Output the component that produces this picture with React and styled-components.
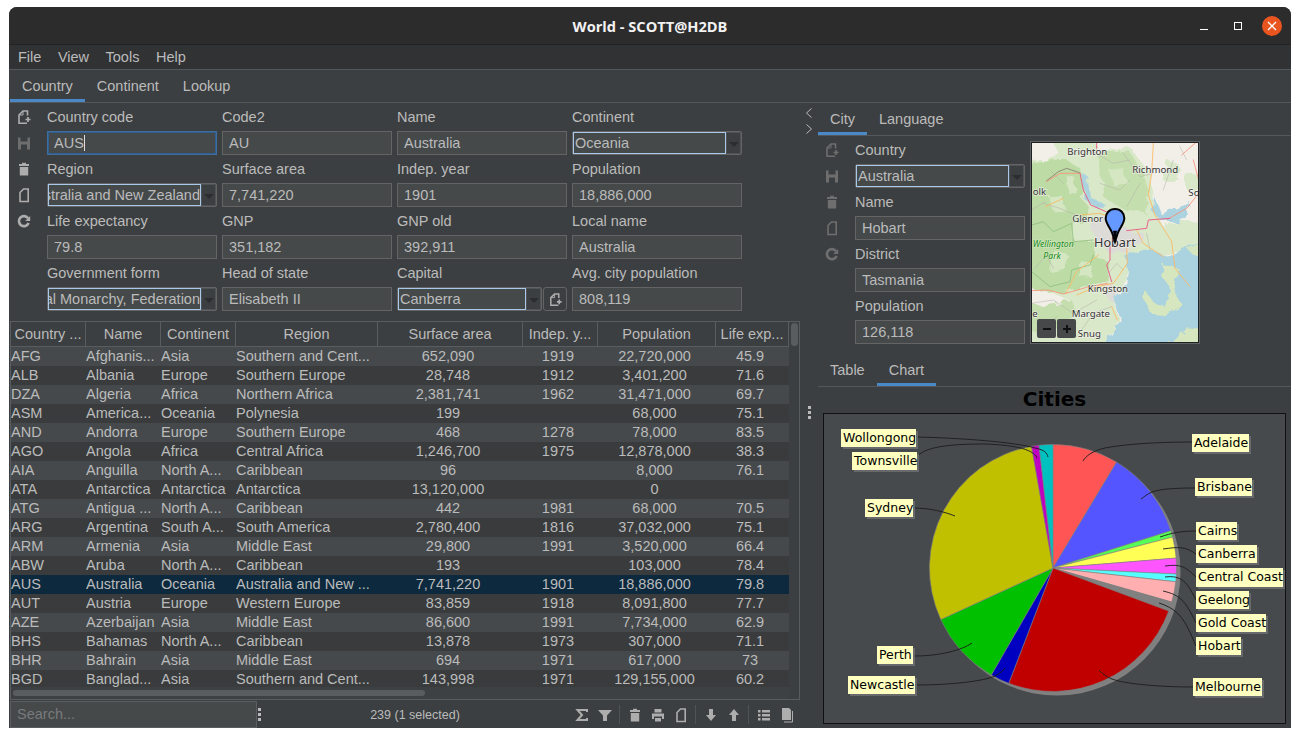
import React from 'react';
import styled, { createGlobalStyle } from 'styled-components';

const GlobalStyle = createGlobalStyle`
  html, body { margin: 0; padding: 0; background: #fff; }
  body { font-family: "Liberation Sans", Arial, sans-serif; font-size: 14.5px; color: #bbb; }
`;

const Window = styled.div`
  width: 1282px;
  height: 721px;
  margin: 7px 0 0 9px;
  background: #3c3f41;
  border-radius: 8px 8px 0 0;
  display: flex;
  flex-direction: column;
  overflow: hidden;
`;

const TitleBar = styled.div`
  height: 36px;
  padding-top: 1px;
  flex: none;
  background: #2c2c2c;
  border-bottom: 1px solid #232323;
  position: relative;
  display: flex;
  align-items: center;
  justify-content: center;
  color: #f2f2f2;
  font-family: "Open Sans", sans-serif;
  font-weight: 700;
  font-size: 14.6px;
`;

const WindowButtons = styled.div`
  position: absolute;
  right: 9px;
  top: 9px;
  display: flex;
  align-items: center;
  gap: 14px;
`;

const WinButton = styled.div`
  width: 20px;
  height: 20px;
  display: flex;
  align-items: center;
  justify-content: center;
  border-radius: 50%;
  background: ${p => (p.$close ? '#e9541f' : 'transparent')};
`;

const MenuBar = styled.div`
  height: 24px;
  flex: none;
  background: #303234;
  border-bottom: 1px solid #55585a;
  display: flex;
  align-items: center;
  padding-left: 9px;
  gap: 16.5px;
`;

const TabBar = styled.div`
  height: 32px;
  flex: none;
  display: flex;
  border-bottom: 1px solid #55585a;
  padding-left: ${p => (p.$inset ? '1px' : '0')};
`;

const Tab = styled.div`
  padding: 0 12px;
  line-height: 32px;
  height: 32px;
  box-sizing: border-box;
  margin-bottom: -1px;
  border-bottom: ${p => (p.$active ? '3px solid #4a88c7' : 'none')};
`;

const Main = styled.div`
  flex: 1;
  display: flex;
  min-height: 0;
`;

const LeftPane = styled.div`
  width: 790px;
  padding-left: 1px;
  display: flex;
  flex-direction: column;
`;

const Splitter = styled.div`
  width: 18px;
  flex: none;
  position: relative;
  display: flex;
  flex-direction: column;
  align-items: center;
`;

const Chevrons = styled.div`
  display: flex;
  flex-direction: column;
  gap: 4px;
  margin: 4px 1px 0 0;
`;

const SplitDots = styled.div`
  margin-top: 271px;
  display: flex;
  flex-direction: column;
  gap: 2px;
  & > i {
    width: 3px;
    height: 3px;
    background: #bbb;
    display: block;
  }
`;

const RightPane = styled.div`
  width: 473px;
  flex: none;
  display: flex;
  flex-direction: column;
`;

const FormRow = styled.div`
  display: flex;
  flex: none;
`;

const SideTools = styled.div`
  width: 37px;
  flex: none;
  display: flex;
  flex-direction: column;
  padding-top: 1px;
`;

const SideTool = styled.div`
  height: 26px;
  width: 26px;
  margin-left: 1px;
  display: flex;
  align-items: center;
  justify-content: center;
`;

const FormGrid = styled.div`
  display: grid;
  grid-template-columns: repeat(${p => p.$cols || 4}, 170px);
  column-gap: 5px;
`;

const FieldBox = styled.div`
  display: flex;
  flex-direction: column;
  min-width: 0;
`;

const Label = styled.div`
  height: 28px;
  line-height: 28px;
`;

const Input = styled.div`
  height: 24px;
  box-sizing: border-box;
  background: #45494a;
  border: 1px solid ${p => (p.$focus ? '#3f6e9e' : '#646464')};
  box-shadow: ${p => (p.$focus ? 'inset 0 0 0 1px #2f5f90' : 'none')};
  line-height: 22px;
  padding-left: 6px;
  white-space: nowrap;
  overflow: hidden;
`;

const Caret = styled.span`
  display: inline-block;
  width: 1px;
  height: 16px;
  background: #ddd;
  vertical-align: -3px;
`;

const ComboRow = styled.div`
  display: flex;
  gap: 1px;
`;

const Combo = styled.div`
  flex: 1;
  min-width: 0;
  height: 24px;
  box-sizing: border-box;
  display: flex;
  background: #45494a;
  border: 1px solid #646464;
  border-radius: 2px;
`;

const ComboText = styled.div`
  flex: 1;
  min-width: 0;
  border: 1px solid #a9c9ea;
  line-height: 20px;
  padding-left: 1px;
  overflow: hidden;
  white-space: nowrap;
  display: flex;
  justify-content: ${p => (p.$clip ? 'flex-end' : 'flex-start')};
`;

const ComboArrow = styled.div`
  width: 15px;
  flex: none;
  display: flex;
  align-items: center;
  justify-content: center;
  background: #3c3f41;
  box-shadow: inset 0 0 0 1px #505355;
  &::after {
    content: '';
    margin-top: 2px;
    border-left: 5px solid transparent;
    border-right: 5px solid transparent;
    border-top: 5px solid #2b2d2f;
  }
`;

const SmallButton = styled.div`
  width: 24px;
  height: 24px;
  box-sizing: border-box;
  flex: none;
  border: 1px solid #646464;
  border-radius: 3px;
  display: flex;
  align-items: center;
  justify-content: center;
`;

const TableWrap = styled.div`
  margin-top: 10px;
  width: 790px;
  height: 379px;
  box-sizing: border-box;
  border: 1px solid #5a5d5f;
  position: relative;
  overflow: hidden;
`;

const COLUMNS = '75px 75px 75px 142px 145px 75px 118px 73px';

const HeaderRow = styled.div`
  display: grid;
  grid-template-columns: ${COLUMNS};
  height: 24px;
  border-bottom: 1px solid #5a5d5f;
  margin-right: 10px;
`;

const HeaderCell = styled.div`
  text-align: center;
  line-height: 24px;
  border-right: 1px solid #5a5d5f;
  white-space: nowrap;
  overflow: hidden;
`;

const Row = styled.div`
  display: grid;
  grid-template-columns: ${COLUMNS};
  height: 19px;
  line-height: 19px;
  margin-right: 10px;
  background: ${p => (p.$selected ? '#0d293e' : p.$odd ? '#393b3d' : '#45494b')};
`;

const Cell = styled.div`
  white-space: nowrap;
  overflow: hidden;
  text-align: ${p => (p.$center ? 'center' : 'left')};
  padding-right: ${p => (p.$center ? '5px' : '0')};
`;

const VThumb = styled.div`
  position: absolute;
  top: 1px;
  right: 1px;
  width: 7px;
  height: 23px;
  border-radius: 4px;
  background: #5a5d5f;
`;

const HTrack = styled.div`
  position: absolute;
  left: 0;
  right: 9px;
  bottom: 0;
  height: 12px;
  background: #3e4143;
`;

const HThumb = styled.div`
  position: absolute;
  left: 2px;
  top: 3px;
  width: 412px;
  height: 6px;
  border-radius: 3px;
  background: #5a5d5f;
`;

const StatusBar = styled.div`
  flex: 1;
  display: flex;
  align-items: center;
  margin-top: 1px;
`;

const Search = styled.div`
  width: 247px;
  height: 27px;
  box-sizing: border-box;
  background: #45494a;
  border: 1px solid #5a5d5f;
  color: #787a7c;
  line-height: 25px;
  padding-left: 6px;
`;

const MenuDots = styled.div`
  width: 5px;
  display: flex;
  flex-direction: column;
  align-items: center;
  gap: 2px;
  & > i {
    width: 3px;
    height: 3px;
    background: #bbb;
    display: block;
  }
`;

const Count = styled.div`
  flex: 1;
  text-align: center;
  font-size: 12.5px;
  padding-right: 2px;
`;

const ToolBar = styled.div`
  display: flex;
  align-items: center;
  padding-right: 2px;
`;

const ToolButton = styled.div`
  width: 23px;
  height: 23px;
  display: flex;
  align-items: center;
  justify-content: center;
`;

const ToolSep = styled.div`
  width: 1px;
  height: 19px;
  background: #505355;
  margin: 0 3px;
`;

const DetailRow = styled.div`
  display: flex;
  flex: none;
`;

const MapFrame = styled.div`
  width: 170px;
  height: 203px;
  margin: 5px 0 0 5px;
  box-sizing: border-box;
  border: 1px solid #606365;
  padding: 1px;
  background: #1f2021;
  position: relative;
  overflow: hidden;
`;

const MapZoom = styled.div`
  position: absolute;
  left: 6px;
  bottom: 5px;
  display: flex;
  gap: 1px;
`;

const MapZoomButton = styled.div`
  width: 19px;
  height: 19px;
  border-radius: 2px;
  background: #46484a;
  display: flex;
  align-items: center;
  justify-content: center;
`;

const LowerTabs = styled(TabBar)`
  margin-top: 10px;
`;

const ChartPane = styled.div`
  flex: 1;
  display: flex;
  flex-direction: column;
  padding: 0 5px 4px;
  min-height: 0;
`;

const ChartTitle = styled.div`
  height: 26px;
  line-height: 25px;
  text-align: center;
  font-family: "DejaVu Sans", sans-serif;
  font-weight: 700;
  font-size: 20px;
  color: #000;
  flex: none;
`;

const Plot = styled.div`
  flex: 1;
  box-sizing: border-box;
  border: 1px solid #111;
  background: #474a4d;
  overflow: hidden;
`;

// simple 16px glyphs matching the application's toolbar set
const ICONS = {
  add: (
    <g fill="none" stroke="currentColor" strokeWidth="1.6">
      <path d="M11.5 6.5V2H7L3 6v8.2h8" />
      <path d="M7 2v4H3" strokeWidth="1" />
      <path d="M9.5 10.5h5M12 8v5" strokeWidth="1.7" />
    </g>
  ),
  save: (
    <path fill="currentColor" fillRule="evenodd" d="M2 2.5h2.5v4h7v-4H14v12H2zM5 9.5v5h6v-5z" />
  ),
  trash: (
    <g fill="currentColor">
      <rect x="3" y="3" width="10" height="2" />
      <rect x="6" y="1.8" width="4" height="1.4" />
      <rect x="3.8" y="6" width="8.4" height="8.5" />
    </g>
  ),
  doc: (
    <path fill="none" stroke="currentColor" strokeWidth="1.6" d="M12.2 2H7.5L4 5.5v9h8.2z" />
  ),
  refresh: (
    <g>
      <path fill="none" stroke="currentColor" strokeWidth="2.6" d="M12 5.2A5 5 0 1 0 12.6 10" />
      <path fill="currentColor" d="M14.2 3v5H9.2z" />
    </g>
  ),
  sigma: (
    <path fill="none" stroke="currentColor" strokeWidth="2" d="M13 5V3H3.5l4.5 5-4.5 5H13v-2" />
  ),
  filter: <path fill="currentColor" d="M1 3h14L10 8.5V14H6V8.5z" />,
  print: (
    <g fill="currentColor">
      <path d="M4.5 2h7v3.5h-7z" />
      <path fillRule="evenodd" d="M2 6.5h12V12h-2V9.5H4V12H2z" />
      <path d="M5 11h6v3.5H5z" />
    </g>
  ),
  down: <path fill="currentColor" d="M6 2h4v6h3l-5 6-5-6h3z" />,
  up: <path fill="currentColor" d="M6 14h4V8h3L8 2 3 8h3z" />,
  list: (
    <g fill="currentColor">
      <path d="M2 3h2.5v2.5H2zM6 3h8v2.5H6zM2 7h2.5v2.5H2zM6 7h8v2.5H6zM2 11h2.5v2.5H2zM6 11h8v2.5H6z" />
    </g>
  ),
  copy: (
    <g>
      <path fill="none" stroke="currentColor" strokeWidth="1" d="M13.5 4v11H5" />
      <path fill="currentColor" d="M3 1h7l2 2v10H3z" />
    </g>
  ),
};

const Icon = ({ name, color = '#adadad', size = 16 }) => (
  <svg width={size} height={size} viewBox="0 0 16 16" style={{ color }}>
    {ICONS[name]}
  </svg>
);

const Chevron = ({ left }) => (
  <svg width="8" height="12" viewBox="0 0 8 12">
    <path d={left ? 'M6.5 1.5L1.5 6l5 4.5' : 'M1.5 1.5L6.5 6l-5 4.5'} fill="none" stroke="#bbb" strokeWidth="1" />
  </svg>
);

const Field = ({ label, value, focus, caret }) => (
  <FieldBox>
    <Label>{label}</Label>
    <Input $focus={focus}>
      {value}
      {caret && <Caret />}
    </Input>
  </FieldBox>
);

const ComboField = ({ label, value, clip, extra }) => (
  <FieldBox>
    <Label>{label}</Label>
    <ComboRow>
      <Combo>
        <ComboText $clip={clip}>
          <span>{value}</span>
        </ComboText>
        <ComboArrow />
      </Combo>
      {extra}
    </ComboRow>
  </FieldBox>
);

const HEADERS = ['Country ...', 'Name', 'Continent', 'Region', 'Surface area', 'Indep. y...', 'Population', 'Life exp...'];

const ROWS = [
  ['AFG', 'Afghanis...', 'Asia', 'Southern and Cent...', '652,090', '1919', '22,720,000', '45.9'],
  ['ALB', 'Albania', 'Europe', 'Southern Europe', '28,748', '1912', '3,401,200', '71.6'],
  ['DZA', 'Algeria', 'Africa', 'Northern Africa', '2,381,741', '1962', '31,471,000', '69.7'],
  ['ASM', 'America...', 'Oceania', 'Polynesia', '199', '', '68,000', '75.1'],
  ['AND', 'Andorra', 'Europe', 'Southern Europe', '468', '1278', '78,000', '83.5'],
  ['AGO', 'Angola', 'Africa', 'Central Africa', '1,246,700', '1975', '12,878,000', '38.3'],
  ['AIA', 'Anguilla', 'North A...', 'Caribbean', '96', '', '8,000', '76.1'],
  ['ATA', 'Antarctica', 'Antarctica', 'Antarctica', '13,120,000', '', '0', ''],
  ['ATG', 'Antigua ...', 'North A...', 'Caribbean', '442', '1981', '68,000', '70.5'],
  ['ARG', 'Argentina', 'South A...', 'South America', '2,780,400', '1816', '37,032,000', '75.1'],
  ['ARM', 'Armenia', 'Asia', 'Middle East', '29,800', '1991', '3,520,000', '66.4'],
  ['ABW', 'Aruba', 'North A...', 'Caribbean', '193', '', '103,000', '78.4'],
  ['AUS', 'Australia', 'Oceania', 'Australia and New ...', '7,741,220', '1901', '18,886,000', '79.8'],
  ['AUT', 'Austria', 'Europe', 'Western Europe', '83,859', '1918', '8,091,800', '77.7'],
  ['AZE', 'Azerbaijan', 'Asia', 'Middle East', '86,600', '1991', '7,734,000', '62.9'],
  ['BHS', 'Bahamas', 'North A...', 'Caribbean', '13,878', '1973', '307,000', '71.1'],
  ['BHR', 'Bahrain', 'Asia', 'Middle East', '694', '1971', '617,000', '73'],
  ['BGD', 'Banglad...', 'Asia', 'Southern and Cent...', '143,998', '1971', '129,155,000', '60.2'],
];

// drawn in the 510x615 space of a 3x crop, scaled down by the viewBox
const MapDrawing = () => (
  <svg width="166" height="199" viewBox="6 9 498 597" style={{ display: 'block' }}>
    <defs>
      <filter id="rough" x="-5%" y="-5%" width="110%" height="110%">
        <feTurbulence type="fractalNoise" baseFrequency="0.035" numOctaves="4" seed="7" />
        <feDisplacementMap in="SourceGraphic" scale="26" />
      </filter>
    </defs>
    <rect x="0" y="0" width="510" height="615" fill="#f2efe9" />
    <g filter="url(#rough)">
      {/* forest and scrub */}
      <path fill="#d9e8c8" d="M-20 -20H190L205 40L300 20L360 90L370 190L400 260L470 240L530 250V330L440 340L390 350L300 340L290 420L250 480L270 545L205 635H-20Z" />
      <path fill="#bcdba5" d="M-20 75L70 60L110 60L150 85L165 135L150 170L180 205L170 240L128 250L128 300L195 300L195 350L235 365L232 420L170 440L90 460L-20 450Z" />
      <path fill="#c4dfad" d="M205 45L295 30L335 90L355 150L345 220L275 205L225 175Z" />
      <path fill="#c4dfad" d="M-20 480L60 470L125 480L140 520L95 560L40 590L-20 560Z" />
      <path fill="#d4e6c2" d="M110 110L135 115L140 150L115 160ZM55 165L100 170L105 210L70 215ZM70 330L115 345L105 390L60 395ZM150 360L185 370L185 410L150 415ZM240 90L280 85L290 130L250 140Z" />
      <path fill="#f2efe9" d="M-20 -20H60L85 40L50 60L-20 60ZM305 30L370 -10L530 -10V170L455 200L405 150L360 100ZM-10 440L90 470L120 480L40 500L-20 480Z" />
      <path fill="#d9e8c8" d="M410 60L450 75L440 130L398 120ZM465 100L530 95V150L470 150ZM385 270L430 300L400 340L360 320Z" />
      {/* built up around the city */}
      <path fill="#dddbd7" d="M180 240L235 225L300 270L295 335L240 340L195 295ZM220 430L265 440L260 490L235 480ZM280 275L340 275L345 300L300 320Z" />
      {/* water */}
      <path fill="#aad3df" d="M530 305L470 320L440 345L405 350L372 335L330 330L300 340L285 345L296 400L292 432L252 480L274 545L205 635H530Z" />
      <path fill="#d6e6bf" d="M395 372L447 385L430 440L452 490L410 526L365 522L335 466L346 450L372 488L405 498L420 450L400 415Z" />
      <path fill="#d6e6bf" d="M470 325L530 305V345L490 345ZM405 630L470 565L530 570V635Z" />
      <path fill="#aad3df" d="M155 100L172 108L180 170L228 196L206 208L164 180ZM372 170L396 226L440 204L484 188L446 250L395 244L368 215Z" />
    </g>
    <g fill="none" strokeLinecap="round" strokeLinejoin="round">
      <path stroke="#b5b2ac" strokeWidth="1.6" d="M40 190L90 205L150 230M5 490L70 480L130 520L200 480M280 40L330 110L370 100M330 130L290 200M430 60L400 150M140 590L190 520L245 500M15 385L50 345L70 385M100 130L60 90M180 30L250 70L300 60M210 130L270 150L300 120M5 210L45 185M360 330L350 280M470 60L450 20M20 580L80 530M280 390L260 370L235 400" />
      <path stroke="#8fbe7d" strokeWidth="2.4" d="M5 255L40 245L70 275L125 250L130 305L190 300M5 395L60 440L120 425L125 390L180 375L190 345" />
      <path stroke="#fcb862" strokeWidth="2.6" d="M370 10L365 100L355 165L375 225L425 305L435 385L480 440M290 325L292 370L250 430L200 440L140 465M205 345L140 395L108 460M150 225L210 220L262 240M320 270L340 310L400 350M245 500L262 540M45 200L100 175" />
      <path stroke="#fc917b" strokeWidth="2.6" d="M5 452L55 450L100 462L170 442L232 430M50 125L90 100L150 100M412 238L470 205L506 160M455 45L506 0M490 60L506 120" />
      <path stroke="#e6648c" strokeWidth="3" d="M200 10V25M150 100L160 150L182 195L235 218M290 272L350 265L355 240L420 235M240 318L240 360L230 375L245 425" />
      <path stroke="#8a8172" strokeWidth="2.6" d="M50 122L85 95L110 85L148 98" />
    </g>
    <g fontFamily="Noto Sans, sans-serif" fontSize="29" fill="#333" stroke="#f4f2ee" strokeWidth="4" style={{ paintOrder: 'stroke' }} strokeOpacity="0.8">
      <text x="112" y="45">Brighton</text>
      <text x="307" y="98">Richmond</text>
      <text x="8" y="164">olk</text>
      <text x="475" y="168">So</text>
      <text x="127" y="245">Glenor</text>
      <text x="173" y="455">Kingston</text>
      <text x="125" y="532">Margate</text>
      <text x="143" y="592">Snug</text>
      <text x="7" y="532">e</text>
      <text x="192" y="320" fontSize="38">Hobart</text>
    </g>
    <g fontFamily="Noto Sans, sans-serif" fontSize="26" fontStyle="italic" fill="#148a14" stroke="#e6efd8" strokeWidth="3" style={{ paintOrder: 'stroke' }} strokeOpacity="0.7">
      <text x="8" y="322">Wellington</text>
      <text x="40" y="356">Park</text>
    </g>
    <path fill="#6699ff" stroke="#000" strokeWidth="6" d="M255 207C238 207 227 220 227 235C227 250 240 262 247 280L255 305L263 280C270 262 283 250 283 235C283 220 272 207 255 207Z" />
    <path fill="#000" d="M249 272L255 305L261 272Z" />
  </svg>
);

const CX = 1053;
const CY = 568;
const R = 123.5;

const SLICES = [
  { from: 0, to: 31, fill: '#ff5555' },
  { from: 31, to: 72.5, fill: '#5555ff' },
  { from: 72.5, to: 75.5, fill: '#55ff55' },
  { from: 75.5, to: 85.4, fill: '#ffff55' },
  { from: 85.4, to: 92.8, fill: '#ff55ff' },
  { from: 92.8, to: 96.4, fill: '#55ffff' },
  { from: 96.4, to: 106, fill: '#ffafaf' },
  { from: 106, to: 110.4, fill: '#808080' },
  { from: 110.4, to: 201, fill: '#c00000' },
  { from: 201, to: 210, fill: '#0000c0' },
  { from: 210, to: 245.3, fill: '#00c000' },
  { from: 245.3, to: 350, fill: '#c0c000' },
  { from: 350, to: 353.5, fill: '#c000c0' },
  { from: 353.5, to: 360, fill: '#00c0c0' },
];

const slicePath = ({ from, to }) => {
  const pt = deg => {
    const a = (deg * Math.PI) / 180;
    return `${CX + R * Math.sin(a)} ${CY - R * Math.cos(a)}`;
  };
  return `M${CX} ${CY}L${pt(from)}A${R} ${R} 0 ${to - from > 180 ? 1 : 0} 1 ${pt(to)}Z`;
};

const LABELS = [
  { text: 'Wollongong', x: 841, y: 429, w: 75, h: 18, line: 'M917 437C960 438 1015 442 1035 448C1045 450 1047 453 1048 457' },
  { text: 'Townsville', x: 852, y: 452, w: 65, h: 18, line: 'M917 457C925 445 960 444 985 444C1010 445 1033 448 1037 458' },
  { text: 'Sydney', x: 865, y: 499, w: 48, h: 18, line: 'M913 508C930 508 945 512 955 516' },
  { text: 'Adelaide', x: 1192, y: 434, w: 57, h: 18, line: 'M1192 442C1160 442 1125 444 1105 448C1092 451 1086 456 1083 461' },
  { text: 'Brisbane', x: 1195, y: 478, w: 57, h: 18, line: 'M1195 488C1175 488 1160 489 1152 492C1147 494 1144 497 1141 499' },
  { text: 'Cairns', x: 1196, y: 522, w: 41, h: 18, line: 'M1196 531C1180 531 1172 533 1160 537' },
  { text: 'Canberra', x: 1196, y: 545, w: 61, h: 18, line: 'M1196 554C1185 546 1178 547 1163 549' },
  { text: 'Central Coast', x: 1196, y: 568, w: 87, h: 19, line: 'M1196 577C1185 566 1180 564 1165 566' },
  { text: 'Geelong', x: 1196, y: 591, w: 53, h: 18, line: 'M1196 600C1187 582 1182 575 1165 577' },
  { text: 'Gold Coast', x: 1196, y: 614, w: 70, h: 18, line: 'M1196 623C1185 600 1180 595 1163 591' },
  { text: 'Hobart', x: 1196, y: 637, w: 45, h: 18, line: 'M1196 646C1185 620 1180 610 1159 603' },
  { text: 'Melbourne', x: 1193, y: 678, w: 69, h: 18, line: 'M1193 687C1160 687 1125 684 1112 679C1105 676 1102 673 1099 670' },
  { text: 'Perth', x: 877, y: 646, w: 36, h: 18, line: 'M915 656C940 656 962 650 972 643' },
  { text: 'Newcastle', x: 848, y: 676, w: 67, h: 18, line: 'M917 685C950 685 985 681 995 676C1000 673 1003 671 1005 668' },
];

const PieChart = () => (
  <svg width="462" height="309" viewBox="824 414 462 309" style={{ display: 'block' }}>
    <circle cx={CX + 4} cy={CY + 4} r={R} fill="#808080" />
    {SLICES.map(s => (
      <path key={s.from} d={slicePath(s)} fill={s.fill} stroke="#808080" strokeWidth="0.6" />
    ))}
    {LABELS.map(l => (
      <path key={l.text} d={l.line} fill="none" stroke="#1c1c1c" strokeWidth="0.9" />
    ))}
    {LABELS.map(l => (
      <g key={l.text}>
        <rect x={l.x + 2} y={l.y + 2} width={l.w} height={l.h} fill="#68696b" />
        <rect x={l.x} y={l.y} width={l.w} height={l.h} fill="#ffffc0" />
        <text x={l.x + 2} y={l.y + 13} fontFamily="DejaVu Sans, sans-serif" fontSize="12.5" fill="#000">
          {l.text}
        </text>
      </g>
    ))}
  </svg>
);

const App = () => (
  <>
    <GlobalStyle />
    <Window>
      <TitleBar>
        World - SCOTT@H2DB
        <WindowButtons>
          <WinButton>
            <svg width="10" height="10" viewBox="0 0 10 10"><path d="M1 8.5h8" stroke="#fff" strokeWidth="1" /></svg>
          </WinButton>
          <WinButton>
            <svg width="10" height="10" viewBox="0 0 10 10"><rect x="1.5" y="1.5" width="7" height="7" fill="none" stroke="#fff" /></svg>
          </WinButton>
          <WinButton $close>
            <svg width="10" height="10" viewBox="0 0 10 10"><path d="M1 1l8 8M9 1l-8 8" stroke="#fff" strokeWidth="1.3" /></svg>
          </WinButton>
        </WindowButtons>
      </TitleBar>
      <MenuBar>
        <span>File</span>
        <span>View</span>
        <span>Tools</span>
        <span>Help</span>
      </MenuBar>
      <TabBar $inset>
        <Tab $active>Country</Tab>
        <Tab>Continent</Tab>
        <Tab>Lookup</Tab>
      </TabBar>
      <Main>
        <LeftPane>
          <FormRow>
            <SideTools>
              <SideTool><Icon name="add" /></SideTool>
              <SideTool><Icon name="save" color="#6e6e6e" /></SideTool>
              <SideTool><Icon name="trash" /></SideTool>
              <SideTool><Icon name="doc" /></SideTool>
              <SideTool><Icon name="refresh" /></SideTool>
            </SideTools>
            <FormGrid>
              <Field label="Country code" value="AUS" focus caret />
              <Field label="Code2" value="AU" />
              <Field label="Name" value="Australia" />
              <ComboField label="Continent" value="Oceania" />
              <ComboField label="Region" value="Australia and New Zealand" clip />
              <Field label="Surface area" value="7,741,220" />
              <Field label="Indep. year" value="1901" />
              <Field label="Population" value="18,886,000" />
              <Field label="Life expectancy" value="79.8" />
              <Field label="GNP" value="351,182" />
              <Field label="GNP old" value="392,911" />
              <Field label="Local name" value="Australia" />
              <ComboField label="Government form" value="Constitutional Monarchy, Federation" clip />
              <Field label="Head of state" value="Elisabeth II" />
              <ComboField
                label="Capital"
                value="Canberra"
                extra={<SmallButton><Icon name="add" size={15} /></SmallButton>}
              />
              <Field label="Avg. city population" value="808,119" />
            </FormGrid>
          </FormRow>
          <TableWrap>
            <HeaderRow>
              {HEADERS.map(h => <HeaderCell key={h}>{h}</HeaderCell>)}
            </HeaderRow>
            {ROWS.map((row, i) => (
              <Row key={row[0]} $odd={i % 2 === 1} $selected={row[0] === 'AUS'}>
                {row.map((c, j) => (
                  <Cell key={j} $center={j > 3}>{c}</Cell>
                ))}
              </Row>
            ))}
            <VThumb />
            <HTrack><HThumb /></HTrack>
          </TableWrap>
          <StatusBar>
            <Search>Search...</Search>
            <MenuDots><i /><i /><i /></MenuDots>
            <Count>239 (1 selected)</Count>
            <ToolBar>
              <ToolButton><Icon name="sigma" /></ToolButton>
              <ToolButton><Icon name="filter" /></ToolButton>
              <ToolSep />
              <ToolButton><Icon name="trash" /></ToolButton>
              <ToolButton><Icon name="print" /></ToolButton>
              <ToolButton><Icon name="doc" /></ToolButton>
              <ToolSep />
              <ToolButton><Icon name="down" /></ToolButton>
              <ToolButton><Icon name="up" /></ToolButton>
              <ToolSep />
              <ToolButton><Icon name="list" /></ToolButton>
              <ToolButton><Icon name="copy" /></ToolButton>
            </ToolBar>
          </StatusBar>
        </LeftPane>
        <Splitter>
          <Chevrons>
            <Chevron left />
            <Chevron />
          </Chevrons>
          <SplitDots><i /><i /><i /></SplitDots>
        </Splitter>
        <RightPane>
          <TabBar>
            <Tab $active>City</Tab>
            <Tab>Language</Tab>
          </TabBar>
          <DetailRow>
            <SideTools>
              <SideTool><Icon name="add" color="#6e6e6e" /></SideTool>
              <SideTool><Icon name="save" color="#6e6e6e" /></SideTool>
              <SideTool><Icon name="trash" color="#6e6e6e" /></SideTool>
              <SideTool><Icon name="doc" color="#6e6e6e" /></SideTool>
              <SideTool><Icon name="refresh" color="#6e6e6e" /></SideTool>
            </SideTools>
            <FormGrid $cols={1}>
              <ComboField label="Country" value="Australia" />
              <Field label="Name" value="Hobart" />
              <Field label="District" value="Tasmania" />
              <Field label="Population" value="126,118" />
            </FormGrid>
            <MapFrame>
              <MapDrawing />
              <MapZoom>
                <MapZoomButton>
                  <svg width="10" height="10" viewBox="0 0 10 10"><path d="M1 5h8" stroke="#111" strokeWidth="2" /></svg>
                </MapZoomButton>
                <MapZoomButton>
                  <svg width="10" height="10" viewBox="0 0 10 10"><path d="M1 5h8M5 1v8" stroke="#111" strokeWidth="2" /></svg>
                </MapZoomButton>
              </MapZoom>
            </MapFrame>
          </DetailRow>
          <LowerTabs>
            <Tab>Table</Tab>
            <Tab $active>Chart</Tab>
          </LowerTabs>
          <ChartPane>
            <ChartTitle>Cities</ChartTitle>
            <Plot><PieChart /></Plot>
          </ChartPane>
        </RightPane>
      </Main>
    </Window>
  </>
);

export default App;
